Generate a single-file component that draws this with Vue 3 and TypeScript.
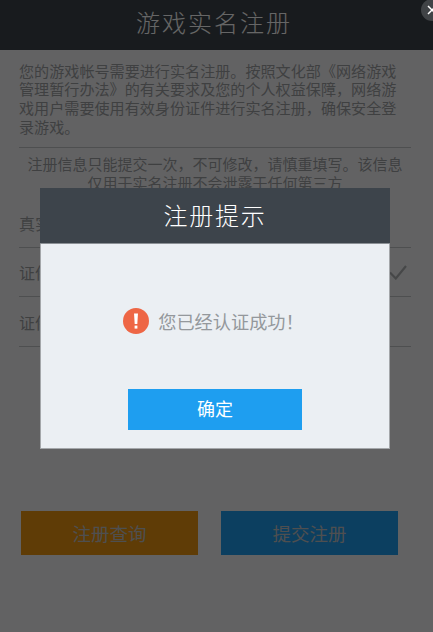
<script setup lang="ts">
const comma = '\uFF0C'
const intro = `您的游戏帐号需要进行实名注册。按照文化部《网络游戏管理暂行办法》的有关要求及您的个人权益保障${comma}网络游戏用户需要使用有效身份证件进行实名注册${comma}确保安全登录游戏。`
const notice = `注册信息只能提交一次${comma}不可修改${comma}请慎重填写。该信息仅用于实名注册不会泄露于任何第三方`
const success = '您已经认证成功\uFF01'
const rows = [
  { label: '真实姓名', checked: false },
  { label: '证件类型', checked: true },
  { label: '证件号码', checked: false },
]
</script>

<template>
  <div class="page">
    <header class="top">游戏实名注册</header>
    <main class="content">
      <p class="intro">{{ intro }}</p>
      <p class="notice">{{ notice }}</p>
      <ul class="form">
        <li v-for="row in rows" :key="row.label" class="row">
          <span>{{ row.label }}</span>
          <svg v-if="row.checked" class="check" viewBox="0 0 18 15" width="18" height="15">
            <path d="M1 7.5 L6.8 13.5 L17 1" fill="none" stroke="currentColor" stroke-width="2.2" />
          </svg>
        </li>
      </ul>
      <div class="actions">
        <button class="action orange" type="button">注册查询</button>
        <button class="action blue" type="button">提交注册</button>
      </div>
    </main>

    <div class="overlay"></div>

    <section class="dialog">
      <h2 class="dialog-title">注册提示</h2>
      <div class="dialog-body">
        <div class="message">
          <svg class="alert" viewBox="0 0 26 26" width="26" height="26">
            <circle cx="13" cy="13" r="13" fill="#ee6645" />
            <path d="M11 5.5 H15 L14.3 16 H11.7 Z" fill="#fff" />
            <rect x="11.6" y="17.6" width="2.8" height="3" fill="#fff" />
          </svg>
          <span>{{ success }}</span>
        </div>
        <button class="confirm" type="button">确定</button>
      </div>
    </section>

    <button class="close" type="button" aria-label="关闭">
      <svg viewBox="0 0 10 10" width="10" height="10">
        <path d="M1 1 L9 9 M9 1 L1 9" stroke="#fff" stroke-width="1.5" fill="none" />
      </svg>
    </button>
  </div>
</template>

<style scoped>
.page {
  position: relative;
  width: 433px;
  height: 632px;
  overflow: hidden;
  background: #f5f6f8;
  color: #9fa1a4;
  font-family: "Noto Sans CJK SC", "Liberation Sans", sans-serif;
}
.top {
  height: 49.5px;
  padding-right: 5px;
  box-sizing: border-box;
  background: #3d444b;
  color: #ffffff;
  font-size: 24px;
  font-weight: 300;
  line-height: 44px;
  letter-spacing: 2px;
  text-align: center;
}
.content {
  padding: 11px 22px 0 19px;
}
.intro {
  margin: 0;
  padding: 0 0 12px;
  width: 392px;
  box-sizing: border-box;
  border-bottom: 1px solid #c4c6c9;
  font-size: 15.1px;
  line-height: 18.7px;
}
.notice {
  margin: 0;
  width: 392px;
  padding: 6px 8px 0;
  box-sizing: border-box;
  font-size: 15px;
  line-height: 19px;
  text-align: center;
}
.form {
  list-style: none;
  margin: 6px 0 0;
  padding: 0;
  width: 392px;
}
.row {
  display: flex;
  align-items: center;
  justify-content: space-between;
  height: 49.5px;
  box-sizing: border-box;
  border-bottom: 1px solid #c4c6c9;
  font-size: 16px;
}
.check {
  color: #b0b2b5;
  margin-right: 4px;
}
.actions {
  display: flex;
  gap: 23px;
  margin-top: 164px;
  margin-left: 2px;
}
.action {
  width: 177px;
  height: 44px;
  padding: 0;
  border: 0;
  color: #c3c5c8;
  font-family: inherit;
  font-size: 18.5px;
}
.orange {
  background: #ee960f;
}
.blue {
  background: #1e9ef0;
}
.overlay {
  position: absolute;
  inset: 0;
  background: rgba(0, 0, 0, 0.6);
}
.dialog {
  position: absolute;
  left: 40px;
  top: 188px;
  width: 350px;
  height: 261px;
  display: flex;
  flex-direction: column;
  box-sizing: border-box;
  background: #ebeff3;
  border: 1px solid #a4a7aa;
  border-top: 0;
}
.dialog-title {
  margin: 0 -1px;
  height: 56px;
  box-sizing: border-box;
  border-bottom: 1px solid #8b9095;
  background: #3d444b;
  color: #ffffff;
  font-size: 24px;
  font-weight: 300;
  line-height: 54px;
  letter-spacing: 1.8px;
  text-align: center;
}
.dialog-body {
  flex: 1;
  display: flex;
  flex-direction: column;
  align-items: center;
}
.message {
  display: flex;
  align-items: center;
  gap: 9px;
  margin-top: 64px;
  margin-right: 3px;
  color: #94989c;
  font-size: 18.2px;
  line-height: 26px;
}
.confirm {
  width: 174.5px;
  height: 41px;
  margin-top: 55px;
  padding: 0 0 3px;
  border: 0;
  background: #1e9ef0;
  color: #ffffff;
  font-family: inherit;
  font-size: 18px;
}
.close {
  position: absolute;
  left: 421px;
  top: -1px;
  width: 22px;
  height: 22px;
  padding: 0 0 0 6px;
  display: flex;
  align-items: center;
  justify-content: flex-start;
  border: 0;
  border-radius: 50%;
  background: #404346;
}
</style>
